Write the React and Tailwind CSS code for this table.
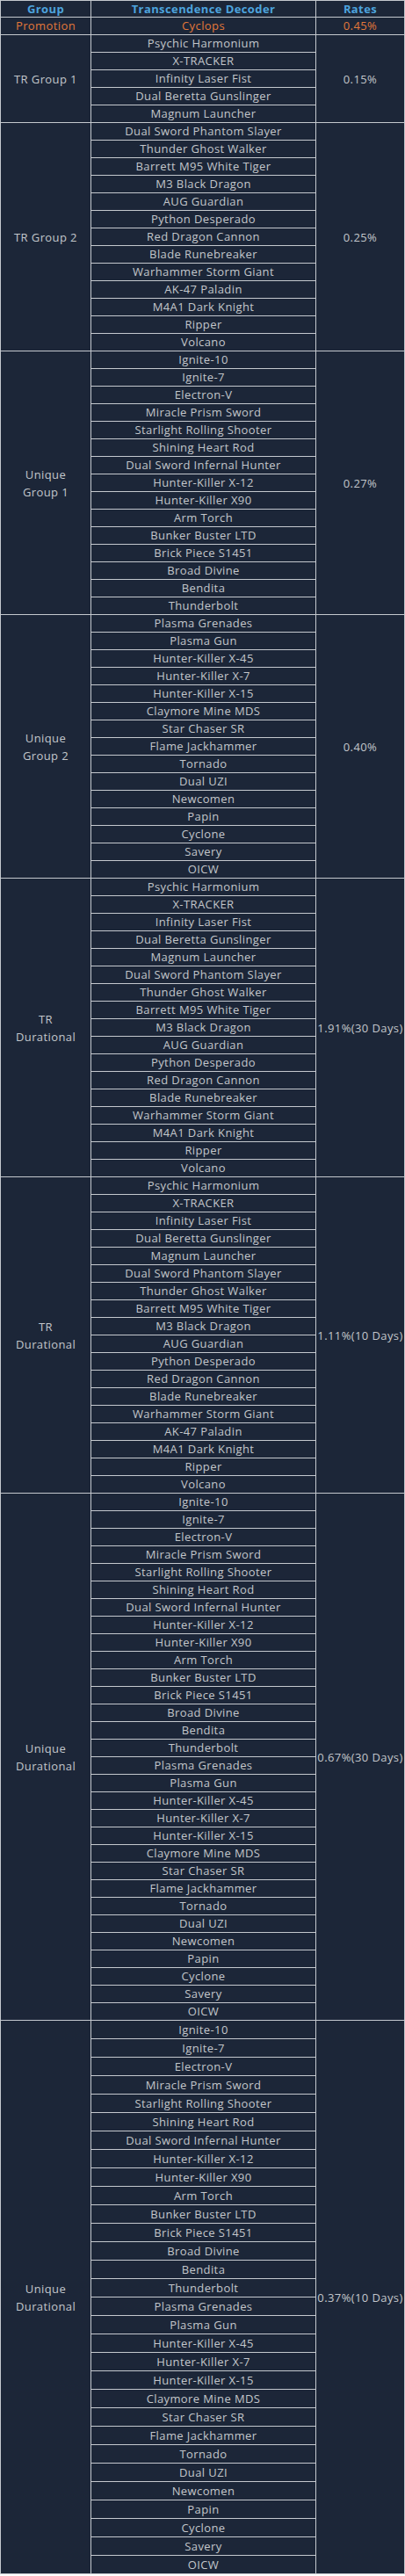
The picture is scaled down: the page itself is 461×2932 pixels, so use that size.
import React from 'react'

const trAll = [
  "Psychic Harmonium", "X-TRACKER", "Infinity Laser Fist", "Dual Beretta Gunslinger", "Magnum Launcher",
]
const tr2 = [
  "Dual Sword Phantom Slayer", "Thunder Ghost Walker", "Barrett M95 White Tiger", "M3 Black Dragon",
  "AUG Guardian", "Python Desperado", "Red Dragon Cannon", "Blade Runebreaker", "Warhammer Storm Giant",
  "AK-47 Paladin", "M4A1 Dark Knight", "Ripper", "Volcano",
]
const unique1 = [
  "Ignite-10", "Ignite-7", "Electron-V", "Miracle Prism Sword", "Starlight Rolling Shooter", "Shining Heart Rod",
  "Dual Sword Infernal Hunter", "Hunter-Killer X-12", "Hunter-Killer X90", "Arm Torch", "Bunker Buster LTD",
  "Brick Piece S1451", "Broad Divine", "Bendita", "Thunderbolt",
]
const unique2 = [
  "Plasma Grenades", "Plasma Gun", "Hunter-Killer X-45", "Hunter-Killer X-7", "Hunter-Killer X-15",
  "Claymore Mine MDS", "Star Chaser SR", "Flame Jackhammer", "Tornado", "Dual UZI", "Newcomen", "Papin",
  "Cyclone", "Savery", "OICW",
]

const groups = [
  { name: "TR Group 1", rate: "0.15%", items: trAll },
  { name: "TR Group 2", rate: "0.25%", items: tr2 },
  { name: ["Unique", "Group 1"], rate: "0.27%", items: unique1 },
  { name: ["Unique", "Group 2"], rate: "0.40%", items: unique2 },
  { name: ["TR", "Durational"], rate: "1.91%(30 Days)", items: [...trAll, ...tr2.filter((x) => x !== "AK-47 Paladin")] },
  { name: ["TR", "Durational"], rate: "1.11%(10 Days)", items: [...trAll, ...tr2] },
  { name: ["Unique", "Durational"], rate: "0.67%(30 Days)", items: [...unique1, ...unique2] },
  { name: ["Unique", "Durational"], rate: "0.37%(10 Days)", items: [...unique1, ...unique2], tall: true },
]

const cell = "border border-[#c4c8ce] p-0 text-center align-middle whitespace-nowrap"

const App = () => {
  return (
    <div className="w-[461px] bg-[#1c2638]" style={{ fontFamily: '"Open Sans", "Noto Sans", sans-serif' }}>
      <table className="w-full border-collapse table-fixed text-[13px] tracking-[0.4px] text-[#c3c6cb]">
        <colgroup>
          <col className="w-[103px]" />
          <col className="w-[256px]" />
          <col />
        </colgroup>
        <thead>
          <tr className="h-[19px] leading-[18px] text-[#4da3dd] font-semibold">
            <th className={cell}>Group</th>
            <th className={cell}>Transcendence Decoder</th>
            <th className={cell}>Rates</th>
          </tr>
        </thead>
        <tbody>
          <tr className="h-[20px] leading-[19px] text-[#e2783a]">
            <td className={cell}>Promotion</td>
            <td className={cell}>Cyclops</td>
            <td className={cell}>0.45%</td>
          </tr>
          {groups.map((g, gi) =>
            g.items.map((item, i) => (
              <tr key={gi + "-" + i} className={g.tall ? "h-[21px] leading-[20px]" : "h-[20px] leading-[19px]"}>
                {i === 0 && (
                  <td rowSpan={g.items.length} className={cell + " leading-[20px]"}>
                    {Array.isArray(g.name) ? g.name.map((n) => <div key={n}>{n}</div>) : g.name}
                  </td>
                )}
                <td className={cell}>{item}</td>
                {i === 0 && (
                  <td rowSpan={g.items.length} className={cell + " leading-[20px]"}>
                    {g.rate}
                  </td>
                )}
              </tr>
            ))
          )}
        </tbody>
      </table>
    </div>
  )
}

export default App
